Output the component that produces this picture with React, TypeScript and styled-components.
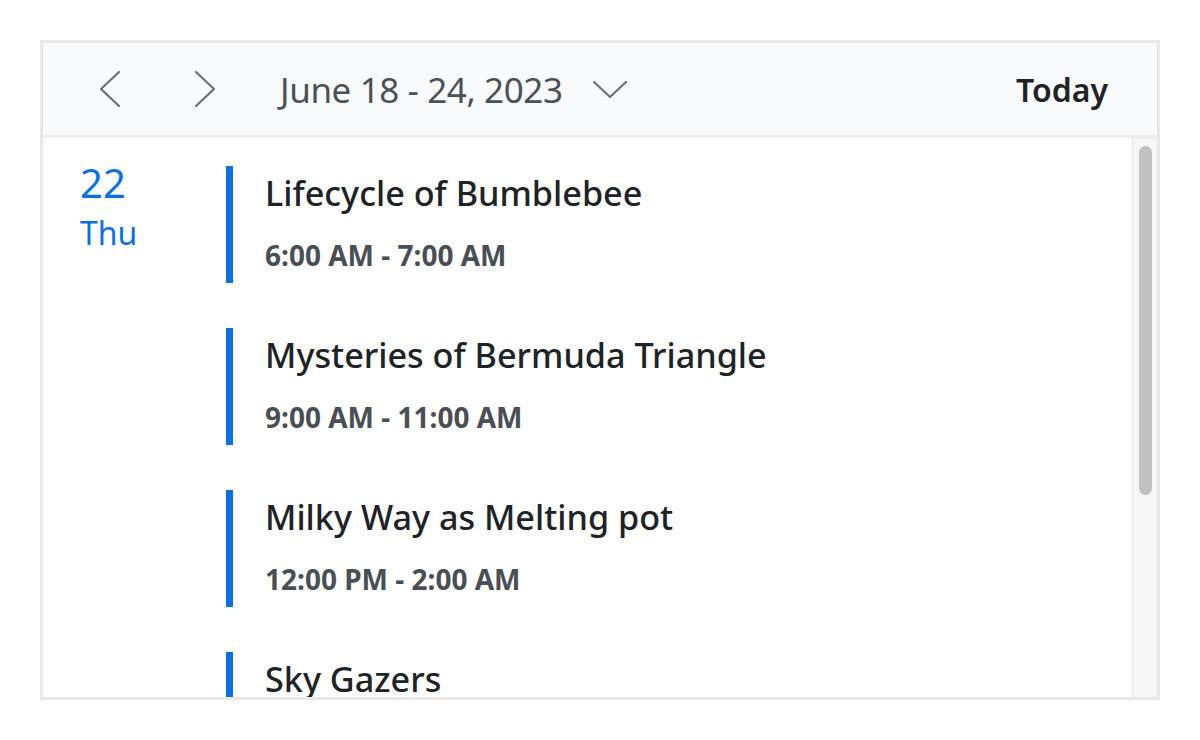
import React from "react";
import styled, { createGlobalStyle } from "styled-components";

const GlobalStyle = createGlobalStyle`
  html, body { margin: 0; padding: 0; background: #ffffff; }
  body { font-family: "Noto Sans", "Open Sans", sans-serif; }
  * { box-sizing: border-box; }
`;

const Page = styled.div`
  padding: 40px;
  width: 1200px;
  height: 740px;
`;

const Scheduler = styled.div`
  width: 1120px;
  height: 660px;
  border: 3px solid #e9e9e9;
  display: flex;
  flex-direction: column;
  background: #ffffff;
`;

const Toolbar = styled.div`
  flex: 0 0 auto;
  height: 94px;
  display: flex;
  align-items: center;
  padding: 0 49px 0 45px;
  background: #f8fafc;
  border-bottom: 2px solid #eaecee;
  box-shadow: 0 1px 2px rgba(0, 0, 0, 0.06);
  position: relative;
  z-index: 1;
`;

const NavButton = styled.button<{ $gap?: number }>`
  width: 44px;
  height: 44px;
  display: flex;
  align-items: center;
  justify-content: center;
  border: none;
  background: transparent;
  padding: 0;
  margin-right: ${(p) => p.$gap ?? 0}px;
  color: #6c7075;
  cursor: pointer;
`;

const DateRange = styled.button`
  display: flex;
  align-items: center;
  gap: 30px;
  border: none;
  background: transparent;
  padding: 0;
  font-family: "Noto Sans", sans-serif;
  font-size: 35px;
  font-weight: 400;
  color: #4c5158;
  letter-spacing: -0.4px;
  cursor: pointer;
`;

const Spacer = styled.div`
  flex: 1;
`;

const TodayButton = styled.button`
  border: none;
  background: transparent;
  padding: 0;
  font-family: "Noto Sans", sans-serif;
  font-size: 32px;
  font-weight: 600;
  color: #1f2326;
  cursor: pointer;
`;

const Body = styled.div`
  flex: 1;
  min-height: 0;
  display: flex;
`;

const Content = styled.div`
  flex: 1;
  overflow: hidden;
  display: flex;
  padding: 29px 0 0 37px;
`;

const ScrollTrack = styled.div`
  flex: 0 0 25px;
  background: #f6f6f6;
  border-left: 1px solid #e4e4e4;
  padding: 9px 5px 0 6px;
`;

const ScrollThumb = styled.div`
  height: 349px;
  background: #c1c1c1;
  border-radius: 7px;
`;

const DayColumn = styled.div`
  flex: 0 0 146px;
  display: flex;
  flex-direction: column;
  color: #0b6fe6;
  margin-top: -3px;
`;

const DayNumber = styled.div`
  font-size: 40px;
  line-height: 40px;
  font-weight: 400;
`;

const DayName = styled.div`
  font-size: 32px;
  line-height: 32px;
  margin-top: 14px;
`;

const EventList = styled.div`
  flex: 1;
  display: flex;
  flex-direction: column;
  gap: 45px;
`;

const EventItem = styled.div`
  height: 117px;
  flex: 0 0 117px;
  border-left: 7px solid #0b6fe6;
  padding: 5px 0 0 32px;
  display: flex;
  flex-direction: column;
`;

const EventTitle = styled.div`
  font-size: 34.2px;
  line-height: 44px;
  font-weight: 500;
  color: #202326;
  white-space: nowrap;
`;

const EventTime = styled.div`
  margin-top: 22px;
  font-size: 28px;
  line-height: 36px;
  font-weight: 700;
  color: #4a4f55;
  white-space: nowrap;
`;

const Chevron = ({ dir }: { dir: "left" | "right" }) => (
  <svg width="20" height="36" viewBox="0 0 20 36" fill="none">
    <polyline
      points={dir === "left" ? "19,1 1,18 19,35" : "1,1 19,18 1,35"}
      stroke="currentColor"
      strokeWidth="2.2"
      strokeLinecap="round"
      strokeLinejoin="round"
    />
  </svg>
);

const DownChevron = () => (
  <svg width="34" height="17" viewBox="0 0 34 17" fill="none">
    <polyline
      points="1,1 17,16 33,1"
      stroke="#6c7075"
      strokeWidth="2.2"
      strokeLinecap="round"
      strokeLinejoin="round"
    />
  </svg>
);

const events = [
  { title: "Lifecycle of Bumblebee", time: "6:00 AM - 7:00 AM" },
  { title: "Mysteries of Bermuda Triangle", time: "9:00 AM - 11:00 AM" },
  { title: "Milky Way as Melting pot", time: "12:00 PM - 2:00 AM" },
  { title: "Sky Gazers", time: "3:00 PM - 4:00 PM" },
];

export default function App() {
  return (
    <>
      <GlobalStyle />
      <Page>
        <Scheduler>
          <Toolbar>
            <NavButton $gap={51} aria-label="Previous">
              <Chevron dir="left" />
            </NavButton>
            <NavButton $gap={53} aria-label="Next">
              <Chevron dir="right" />
            </NavButton>
            <DateRange>
              <span>June 18 - 24, 2023</span>
              <DownChevron />
            </DateRange>
            <Spacer />
            <TodayButton>Today</TodayButton>
          </Toolbar>
          <Body>
            <Content>
              <DayColumn>
                <DayNumber>22</DayNumber>
                <DayName>Thu</DayName>
              </DayColumn>
              <EventList>
                {events.map((e) => (
                  <EventItem key={e.title}>
                    <EventTitle>{e.title}</EventTitle>
                    <EventTime>{e.time}</EventTime>
                  </EventItem>
                ))}
              </EventList>
            </Content>
            <ScrollTrack>
              <ScrollThumb />
            </ScrollTrack>
          </Body>
        </Scheduler>
      </Page>
    </>
  );
}
